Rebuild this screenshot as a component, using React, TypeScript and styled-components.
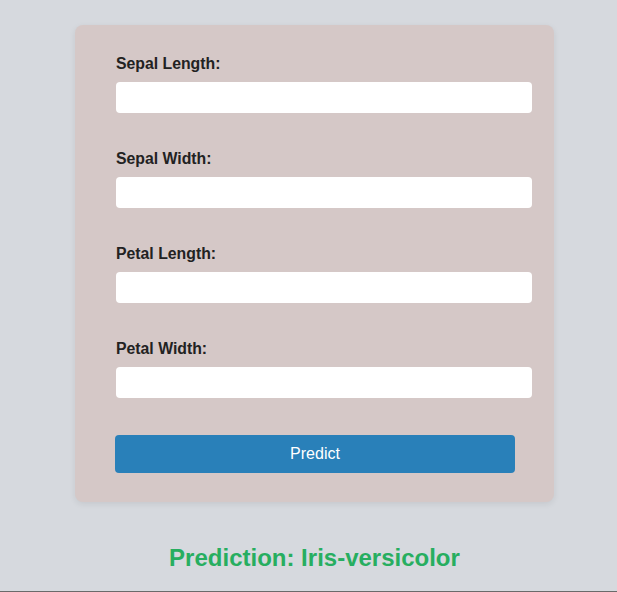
import React from "react";
import styled, { createGlobalStyle } from "styled-components";

const Global = createGlobalStyle`
  html, body { margin: 0; padding: 0; }
  body {
    background: #d6d9de;
    font-family: "Liberation Sans", Arial, sans-serif;
  }
`;

const Page = styled.div`
  box-sizing: border-box;
  height: 592px;
  padding-top: 25px;
  border-bottom: 1px solid #6a6a6a;
`;

const Card = styled.form`
  box-sizing: border-box;
  width: 479px;
  margin-left: 75px;
  padding: 29px 40px 29px 40px;
  background: #d5c8c7;
  border-radius: 8px;
  box-shadow: 0 2px 6px rgba(0, 0, 0, 0.08);
  display: flex;
  flex-direction: column;
`;

const Field = styled.div`
  display: flex;
  flex-direction: column;
  margin-bottom: 36px;
`;

const Label = styled.label`
  font-size: 15.8px;
  font-weight: bold;
  color: #222;
  line-height: 18px;
  margin: 1px 0 9px 1px;
`;

const Input = styled.input`
  box-sizing: border-box;
  width: 416px;
  height: 31px;
  margin-left: 1px;
  border: none;
  border-radius: 4px;
  background: #ffffff;
  padding: 8px;
  font-family: inherit;
  font-size: 14px;
  outline: none;
`;

const Button = styled.button`
  width: 400px;
  height: 38px;
  margin-top: 1px;
  border: none;
  border-radius: 4px;
  background: #2980b9;
  color: #ffffff;
  font-family: "Liberation Sans", Arial, sans-serif;
  font-size: 16px;
  cursor: pointer;
`;

const Result = styled.h2`
  margin: 42px 0 0 75px;
  width: 479px;
  text-align: center;
  color: #27ae60;
  font-size: 24px;
  font-weight: bold;
  line-height: 28px;
`;

const fields = ["Sepal Length:", "Sepal Width:", "Petal Length:", "Petal Width:"];

export default function App() {
  return (
    <Page>
      <Global />
      <Card onSubmit={(e) => e.preventDefault()}>
        {fields.map((f) => (
          <Field key={f}>
            <Label>{f}</Label>
            <Input type="text" />
          </Field>
        ))}
        <Button type="submit">Predict</Button>
      </Card>
      <Result>Prediction: Iris-versicolor</Result>
    </Page>
  );
}
